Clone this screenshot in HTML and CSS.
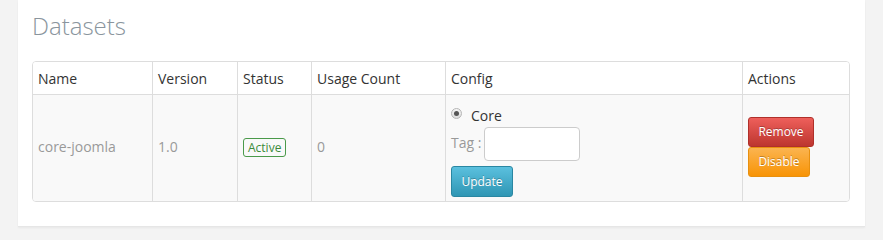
FILE: index.html
```html
<!DOCTYPE html>
<html>
<head>
<meta charset="utf-8">
<link rel="stylesheet" href="styles.css">
</head>
<body>
<div class="panel">
  <h2 class="title">Datasets</h2>
  <div class="table">
    <div class="cell head first">Name</div>
    <div class="cell head">Version</div>
    <div class="cell head">Status</div>
    <div class="cell head">Usage Count</div>
    <div class="cell head">Config</div>
    <div class="cell head">Actions</div>

    <div class="cell body first muted">core-joomla</div>
    <div class="cell body muted">1.0</div>
    <div class="cell body"><span class="badge">Active</span></div>
    <div class="cell body muted">0</div>
    <div class="cell body config">
      <label class="radio-line"><span class="radio"><span class="dot"></span></span>Core</label>
      <div class="tag-line"><span class="tag-label">Tag :</span><span class="input"></span></div>
      <button class="btn btn-info">Update</button>
    </div>
    <div class="cell body actions">
      <button class="btn btn-danger">Remove</button>
      <button class="btn btn-warning">Disable</button>
    </div>
  </div>
</div>
</body>
</html>
```

FILE: styles.css
```css
html, body {
  margin: 0;
  padding: 0;
}
body {
  background: #f3f3f3;
  font-family: "Open Sans", "Liberation Sans", sans-serif;
  padding: 0 18px;
  height: 240px;
  overflow: hidden;
}
.panel {
  width: 847px;
  box-sizing: border-box;
  background: #fff;
  padding: 11px 15px 24px 14px;
  border-bottom: 1px solid #e6e6e6;
  box-shadow: 0 1px 2px rgba(0,0,0,0.05);
}
.title {
  margin: 0 0 20px 0;
  font-size: 24px;
  line-height: 30px;
  font-weight: 300;
  color: #8a959d;
}
.table {
  display: grid;
  grid-template-columns: 119px 85px 74px 134px 297px 108px;
  border: 1px solid #dddddd;
  border-radius: 4px;
  overflow: hidden;
  font-size: 14px;
}
.cell {
  box-sizing: border-box;
  padding: 0 5px;
  border-left: 1px solid #dddddd;
  display: flex;
  align-items: center;
}
.cell.first {
  border-left: none;
}
.head {
  height: 32px;
  color: #333;
  background: #fff;
}
.body {
  border-top: 1px solid #dddddd;
  background: #f9f9f9;
  height: 107px;
  padding-bottom: 3px;
}
.muted {
  color: #999999;
}
.badge {
  display: inline-block;
  border: 1px solid #4a9a4a;
  border-radius: 3px;
  color: #3b8b3b;
  font-size: 12px;
  line-height: 17px;
  padding: 0 4px 0 4px;
  margin-top: 1px;
}
.config {
  flex-direction: column;
  align-items: flex-start;
  justify-content: flex-start;
  padding-top: 10px;
  padding-bottom: 0;
}
.radio-line {
  display: flex;
  align-items: center;
  height: 20px;
  color: #333;
}
.radio {
  width: 9px;
  height: 9px;
  border: 1px solid #b5b5b5;
  border-radius: 50%;
  background: linear-gradient(#f5f5f5, #dcdcdc);
  display: flex;
  align-items: center;
  justify-content: center;
  margin-right: 9px;
  margin-top: -3px;
}
.dot {
  width: 5px;
  height: 5px;
  border-radius: 50%;
  background: #555;
}
.tag-line {
  display: flex;
  align-items: center;
  margin-top: 2px;
}
.tag-label {
  color: #999;
  margin-right: 3px;
  margin-top: -3px;
}
.input {
  display: block;
  width: 96px;
  height: 34px;
  box-sizing: border-box;
  border: 1px solid #cccccc;
  border-radius: 4px;
  background: #fff;
}
.btn {
  font-family: "Open Sans", "Liberation Sans", sans-serif;
  font-size: 12px;
  color: #fff;
  height: 30px;
  box-sizing: border-box;
  padding: 0 11px;
  border-radius: 3px;
  border: 1px solid rgba(0,0,0,0.15);
  text-shadow: 0 -1px 0 rgba(0,0,0,0.25);
  display: block;
  margin: 0;
  cursor: pointer;
}
.btn-info {
  margin-top: 5px;
  width: 62px;
  height: 31px;
  padding: 0;
  background: linear-gradient(#5bc0de, #2f96b4);
  border-color: #2a87a2;
}
.actions {
  flex-direction: column;
  align-items: flex-start;
  justify-content: center;
}
.btn-danger {
  width: 66px;
  padding: 0;
  background: linear-gradient(#ee5f5b, #bd362f);
  border-color: #b0302a;
}
.btn-warning {
  width: 62px;
  padding: 0;
  background: linear-gradient(#fbb450, #f89406);
  border-color: #e8900f;
}
```
